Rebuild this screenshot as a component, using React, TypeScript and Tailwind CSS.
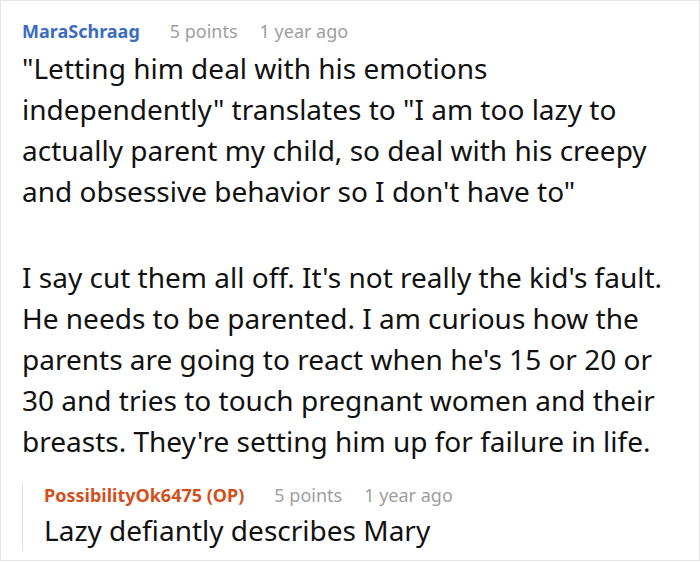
const font = { fontFamily: '"Noto Sans", "Open Sans", sans-serif' };

function Meta({ name, color }: { name: string; color: string }) {
  return (
    <div className="flex items-baseline text-[18px] leading-[24px]">
      <span className={`font-bold ${color}`}>{name}</span>
      <span className="ml-[30px] text-[#9e9e9e]">5 points</span>
      <span className="ml-[22px] text-[#9e9e9e]">1 year ago</span>
    </div>
  );
}

export default function App() {
  return (
    <div className="w-[700px] h-[561px] bg-white border border-[#e5e5e5] pl-[21px] pr-[30px] pt-[18px]" style={font}>
      <Meta name="MaraSchraag" color="text-[#3b6cbf]" />
      <div className="mt-[5px] text-[28px] leading-[41px] text-[#111111]">
        <p>
          "Letting him deal with his emotions independently" translates to "I am too lazy to actually parent my child, so deal
          with his creepy and obsessive behavior so I don't have to"
        </p>
        <p className="mt-[45px]">
          I say cut them all off. It's not really the kid's fault. He needs to be parented. I am curious how the parents are
          going to react when he's 15 or 20 or 30 and tries to touch pregnant women and their breasts. They're setting him up
          for failure in life.
        </p>
      </div>
      <div className="mt-[21px] border-l border-[#e0e0e0] pl-[21px]">
        <Meta name="PossibilityOk6475 (OP)" color="text-[#d2501e]" />
        <p className="mt-[3px] text-[28px] leading-[41px] text-[#111111]">Lazy defiantly describes Mary</p>
      </div>
    </div>
  );
}
